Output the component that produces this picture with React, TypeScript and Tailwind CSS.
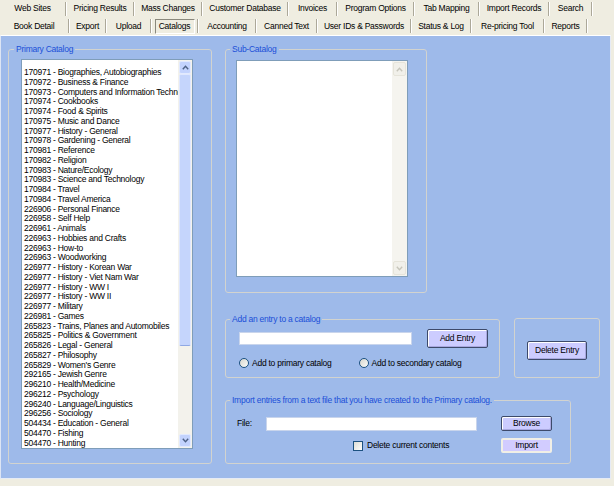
import React from 'react';

type Tab = { label: string; w: string; active?: boolean };

const topRow: Tab[] = [
  { label: 'Web Sites', w: 'w-[67px]' },
  { label: 'Pricing Results', w: 'w-[68px]' },
  { label: 'Mass Changes', w: 'w-[68px]' },
  { label: 'Customer Database', w: 'w-[86px]' },
  { label: 'Invoices', w: 'w-[49px]' },
  { label: 'Program Options', w: 'w-[77px]' },
  { label: 'Tab Mapping', w: 'w-[65px]' },
  { label: 'Import Records', w: 'w-[70px]' },
  { label: 'Search', w: 'w-[43px]' },
];

const bottomRow: Tab[] = [
  { label: 'Book Detail', w: 'w-[70px]' },
  { label: 'Export', w: 'w-[37px]' },
  { label: 'Upload', w: 'w-[45px]' },
  { label: 'Catalogs', w: 'w-[47px]', active: true },
  { label: 'Accounting', w: 'w-[58px]' },
  { label: 'Canned Text', w: 'w-[61px]' },
  { label: 'User IDs & Passwords', w: 'w-[94px]' },
  { label: 'Status & Log', w: 'w-[60px]' },
  { label: 'Re-pricing Tool', w: 'w-[73px]' },
  { label: 'Reports', w: 'w-[43px]' },
];

const catalog = [
  '170971 - Biographies, Autobiographies',
  '170972 - Business &  Finance',
  '170973 - Computers and Information Technology',
  '170974 - Cookbooks',
  '170974 - Food & Spirits',
  '170975 - Music and Dance',
  '170977 - History - General',
  '170978 - Gardening - General',
  '170981 - Reference',
  '170982 - Religion',
  '170983 - Nature/Ecology',
  '170983 - Science and Technology',
  '170984 - Travel',
  '170984 - Travel America',
  '226906 - Personal Finance',
  '226958 - Self Help',
  '226961 - Animals',
  '226963 - Hobbies and Crafts',
  '226963 - How-to',
  '226963 - Woodworking',
  '226977 - History - Korean War',
  '226977 - History - Viet Nam War',
  '226977 - History - WW I',
  '226977 - History - WW II',
  '226977 - Military',
  '226981 - Games',
  '265823 - Trains, Planes and Automobiles',
  '265825 - Politics & Government',
  '265826 - Legal - General',
  '265827 - Philosophy',
  "265829 - Women's Genre",
  '292165 - Jewish Genre',
  '296210 - Health/Medicine',
  '296212 - Psychology',
  '296240 - Language/Linguistics',
  '296256 - Sociology',
  '504434 - Education - General',
  '504470 - Fishing',
  '504470 - Hunting',
];

function Chevron({ up, color }: { up?: boolean; color: string }) {
  return (
    <svg width="7" height="5" viewBox="0 0 7 5">
      <path d={up ? 'M0.8 4.2 L3.5 1.3 L6.2 4.2' : 'M0.8 0.8 L3.5 3.7 L6.2 0.8'} fill="none" stroke={color} strokeWidth="1.4" />
    </svg>
  );
}

function TabRow({ tabs, h }: { tabs: Tab[]; h: string }) {
  return (
    <div className={`flex ${h} items-center`}>
      {tabs.map((t) => (
        <div key={t.label} className={`flex ${t.w} h-full items-center`}>
          <div className="flex flex-1 justify-center">
            {t.active ? (
              <span className="flex h-[15px] w-[40px] items-center justify-center border border-t-[#8A887C] border-l-[#8A887C] border-b-white border-r-white">
                {t.label}
              </span>
            ) : (
              <span className="whitespace-nowrap">{t.label}</span>
            )}
          </div>
          <span className="h-[14px] w-[2px] border-l border-r border-l-[#ACA899] border-r-white" />
        </div>
      ))}
    </div>
  );
}

const groupBox = 'rounded-[3px] border border-[#D2D3CF] p-0 m-0';
const legendCls = 'px-[2px] leading-[10px] text-[#1B4FD8]';
const btn = 'flex items-center justify-center rounded-[2px] border border-[#3D4A6A] bg-[#CCCCFF] shadow-[inset_1px_1px_0_#fff,inset_-1px_-1px_0_#A8A8E0]';

export default function App() {
  return (
    <div className="h-[486px] w-[614px] overflow-hidden bg-[#EFEDE1] font-['Liberation_Sans',Arial,sans-serif] text-[8.5px] tracking-[-0.25px] text-black">
      {/* tab strip */}
      <TabRow tabs={topRow} h="h-[17px]" />
      <TabRow tabs={bottomRow} h="h-[18px]" />

      {/* catalogs page */}
      <div className="flex h-[444px] w-[611px] border-t border-l border-r border-b border-t-white border-l-[#DDE5F4] border-r-[#E6EBF5] border-b-[#E6EBF5] bg-[#9EBAEA] pl-[7px] pt-[8px]">
        <fieldset className={`${groupBox} h-[420px] w-[204px]`}>
          <legend className={`${legendCls} ml-[5px]`}>Primary Catalog</legend>
          <div className="px-[12px] pt-[5px]">
            <div className="flex h-[390px] w-[172px] border border-[#7F9DB9] bg-white">
              <div className="min-w-0 flex-1 overflow-hidden pl-[2px] pt-[8px]">
                {catalog.map((c, i) => (
                  <div key={i} className="h-[9.75px] whitespace-nowrap leading-[9.75px]">
                    {c}
                  </div>
                ))}
              </div>
              <div className="flex w-[14px] flex-col bg-[#F3F2EC] p-px">
                <div className="flex h-[13px] items-center justify-center rounded-[2px] border border-[#E2EAFE] bg-[#C3D3FD]">
                  <Chevron up color="#4D6185" />
                </div>
                <div className="h-[272px] rounded-[2px] border border-[#E0E8FE] border-b-[#8FA8E4] bg-[#C5D5FC]" />
                <div className="flex-1" />
                <div className="flex h-[13px] items-center justify-center rounded-[2px] border border-[#E2EAFE] bg-[#C3D3FD]">
                  <Chevron color="#4D6185" />
                </div>
              </div>
            </div>
          </div>
        </fieldset>

        <div className="ml-[13px] flex flex-col">
          <fieldset className={`${groupBox} h-[249px] w-[202px]`}>
            <legend className={`${legendCls} ml-[4px]`}>Sub-Catalog</legend>
            <div className="px-[10px] pt-[6px]">
              <div className="flex h-[217px] w-[172px] border border-[#7F9DB9] bg-white">
                <div className="flex-1" />
                <div className="flex w-[15px] flex-col bg-[#F5F4EF] p-px">
                  <div className="flex h-[14px] items-center justify-center rounded-[2px] border border-[#E6E4DA] bg-[#F1F0EA]">
                    <Chevron up color="#C6C5BA" />
                  </div>
                  <div className="flex-1" />
                  <div className="flex h-[14px] items-center justify-center rounded-[2px] border border-[#E6E4DA] bg-[#F1F0EA]">
                    <Chevron color="#C6C5BA" />
                  </div>
                </div>
              </div>
            </div>
          </fieldset>

          <div className="mt-[21px] flex">
            <fieldset className={`${groupBox} h-[64px] w-[275px]`}>
              <legend className={`${legendCls} ml-[4px]`}>Add an entry to a catalog</legend>
              <div className="pl-[13px] pt-[5px]">
                <div className="flex h-[19px] items-center">
                  <input className="h-[13px] w-[173px] border border-[#C9D5EC] bg-white outline-none" />
                  <button className={`${btn} ml-[15px] h-[19px] w-[61px]`}>Add Entry</button>
                </div>
                <div className="mt-[10px] flex h-[10px] items-center">
                  <span className="h-[10px] w-[10px] rounded-full border border-[#1C5180] bg-[linear-gradient(135deg,#d6d6cf,#fbfbf8)]" />
                  <span className="ml-[3px]">Add to primary catalog</span>
                  <span className="ml-[27px] h-[10px] w-[10px] rounded-full border border-[#1C5180] bg-[linear-gradient(135deg,#d6d6cf,#fbfbf8)]" />
                  <span className="ml-[3px]">Add to secondary catalog</span>
                </div>
              </div>
            </fieldset>

            <div className="ml-[14px] mt-[4px] flex h-[60px] w-[86px] justify-center rounded-[3px] border border-[#D2D3CF] pt-[22px]">
              <button className={`${btn} h-[19px] w-[60px]`}>Delete Entry</button>
            </div>
          </div>

          <fieldset className={`${groupBox} mt-[17px] h-[69px] w-[346px]`}>
            <legend className={`${legendCls} ml-[4px]`}>
              Import entries from a text file that you have created to the Primary catalog.
            </legend>
            <div className="flex pt-[11px]">
              <div className="flex w-[251px] flex-col">
                <div className="flex h-[15px] items-center pl-[11px]">
                  <span className="w-[29px]">File:</span>
                  <input className="h-[14px] w-[211px] border border-[#C9D5EC] bg-white outline-none" />
                </div>
                <div className="mt-[7px] flex h-[15px] items-center pl-[127px]">
                  <span className="h-[10px] w-[10px] border border-[#1C5180] bg-[linear-gradient(135deg,#dcdcd5,#fdfdfb)]" />
                  <span className="ml-[4px]">Delete current contents</span>
                </div>
              </div>
              <div className="ml-[24px] flex flex-col gap-[7px]">
                <button className={`${btn} h-[15px] w-[51px]`}>Browse</button>
                <button className="flex h-[15px] w-[51px] items-center justify-center rounded-[2px] border-2 border-[#F1EFE6] bg-[#D2CCFF]">
                  Import
                </button>
              </div>
            </div>
          </fieldset>
        </div>
      </div>
    </div>
  );
}
